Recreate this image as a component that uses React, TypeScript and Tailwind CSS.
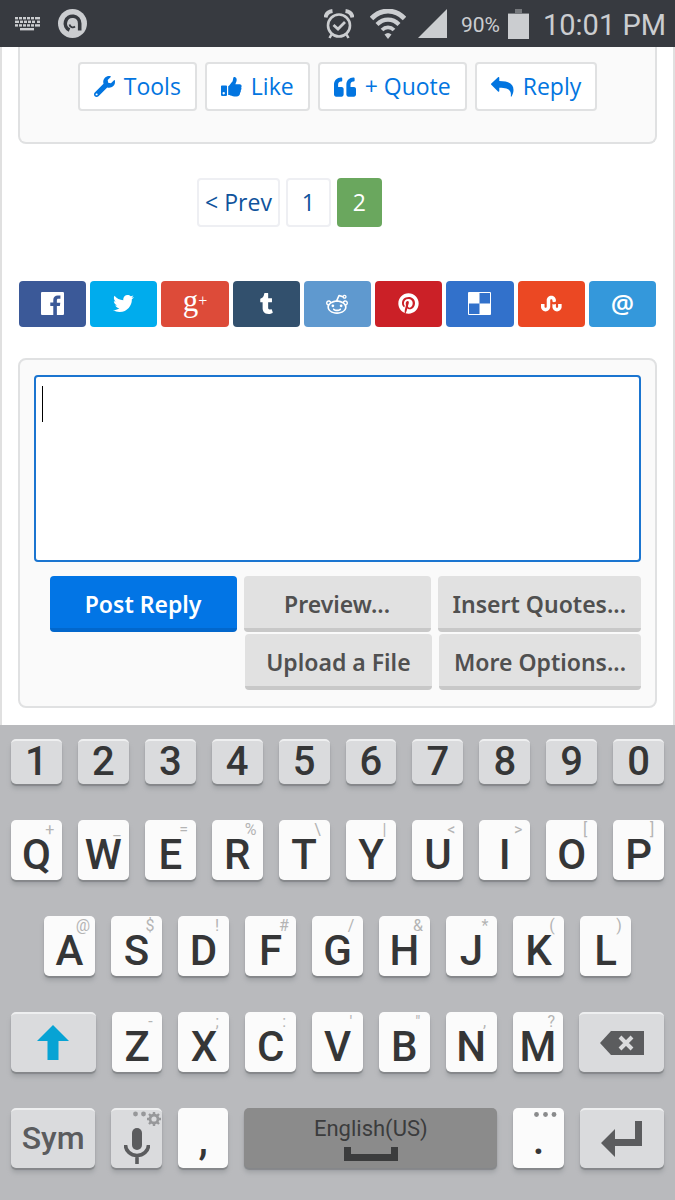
import { useState, type ReactNode } from "react";
import {
  FaPinterest,
  FaQuoteLeft,
  FaStumbleupon,
  FaTumblr,
  FaTwitter,
  FaWrench,
} from "react-icons/fa";
import { ImReddit } from "react-icons/im";

interface KeyDef {
  label: string;
  hint: string;
}

const numbers = ["1", "2", "3", "4", "5", "6", "7", "8", "9", "0"];

const topRow: KeyDef[] = [
  { label: "Q", hint: "+" },
  { label: "W", hint: "_" },
  { label: "E", hint: "=" },
  { label: "R", hint: "%" },
  { label: "T", hint: "\\" },
  { label: "Y", hint: "|" },
  { label: "U", hint: "<" },
  { label: "I", hint: ">" },
  { label: "O", hint: "[" },
  { label: "P", hint: "]" },
];

const middleRow: KeyDef[] = [
  { label: "A", hint: "@" },
  { label: "S", hint: "$" },
  { label: "D", hint: "!" },
  { label: "F", hint: "#" },
  { label: "G", hint: "/" },
  { label: "H", hint: "&" },
  { label: "J", hint: "*" },
  { label: "K", hint: "(" },
  { label: "L", hint: ")" },
];

const bottomRow: KeyDef[] = [
  { label: "Z", hint: "-" },
  { label: "X", hint: ";" },
  { label: "C", hint: ":" },
  { label: "V", hint: "'" },
  { label: "B", hint: "\"" },
  { label: "N", hint: "," },
  { label: "M", hint: "?" },
];

const keyShadow = "rounded-[5px] shadow-[0_2px_1px_#85878a,0_5px_4px_#a3a5a8]";
const greyKey = `${keyShadow} bg-[#dadbdd] border-t-2 border-[#eeeff0] text-[#5b5c5e]`;

function StatusBar() {
  return (
    <header className="flex h-[47px] items-center bg-[#373a40] pl-[15px] pr-[10px] text-[#cbcdd0] font-[Roboto,sans-serif]">
      <svg width="26" height="14" viewBox="0 0 26 14" fill="currentColor" aria-hidden="true">
        {[0, 4, 8, 12, 16, 20].map((x) => (
          <rect key={x} x={x} y="0" width={x === 20 ? 5 : 3} height="2.4" />
        ))}
        {[0, 5, 9, 13, 17, 22].map((x) => (
          <rect key={x} x={x} y="3.6" width={x === 0 ? 4 : 3} height="2.4" />
        ))}
        {[0, 4, 8, 12, 16, 20].map((x) => (
          <rect key={x} x={x} y="7.2" width={x === 20 ? 5 : 3} height="2.4" />
        ))}
        <rect x="5" y="11" width="14" height="2.4" />
      </svg>
      <svg className="ml-[17px]" width="29" height="29" viewBox="0 0 29 29" fill="none" aria-hidden="true">
        <circle cx="14.5" cy="14.5" r="14.5" fill="currentColor" />
        <path d="M11.5 21A7.200 7.200 0 1 1 21.700 14.500V21.500" stroke="#373a40" strokeWidth="3.6" />
        <path d="M11.500 15.500a3.400 3.400 0 0 0 5.500 2" stroke="#373a40" strokeWidth="1.8" />
      </svg>

      <div className="ml-auto flex items-center">
        <svg width="30" height="30" viewBox="0 0 30 30" fill="none" stroke="currentColor" aria-hidden="true">
          <circle cx="15" cy="16.5" r="11" strokeWidth="2.6" />
          <path d="M9.500 16l4.500 4 7-7" strokeWidth="2.8" />
          <path d="M1.500 8.500C2 5 4.500 2.500 8.500 2M28.500 8.500C28 5 25.500 2.500 21.500 2" strokeWidth="4" />
          <path d="M7.500 25.500L5.500 29M22.500 25.500l2 3.500" strokeWidth="2.5" />
        </svg>
        <svg className="ml-4" width="36" height="30" viewBox="0 0 36 30" fill="none" stroke="currentColor" aria-hidden="true">
          <path d="M1.500 9.500C11-.5 25-.5 34.500 9.500" strokeWidth="4.8" />
          <path d="M7 15.500c6.500-6.500 15.500-6.500 22 0" strokeWidth="4.2" />
          <path d="M12 21c3.500-3.500 8.500-3.500 12 0" strokeWidth="3.8" />
          <path d="M14.500 25.500Q18 22.500 21.500 25.500L18 30z" fill="currentColor" stroke="none" />
        </svg>
        <svg className="ml-3" width="29" height="29" viewBox="0 0 29 29" fill="currentColor" aria-hidden="true">
          <path d="M29 0v29H0z" />
        </svg>
        <span className="ml-[14px] w-10 pt-1 text-[21px]">90%</span>
        <svg className="ml-[7px]" width="21" height="30" viewBox="0 0 21 30" aria-hidden="true">
          <path d="M7 0h7v4h7v3H0V4h7z" fill="#75787c" />
          <rect y="5" width="21" height="25" fill="currentColor" />
        </svg>
        <time className="ml-[14px] w-[122px] whitespace-nowrap pt-1 text-[29px]">10:01 PM</time>
      </div>
    </header>
  );
}

function ThumbIcon() {
  return (
    <svg width="21" height="20" viewBox="0 0 21 20" fill="currentColor" aria-hidden="true">
      <path
        fillRule="evenodd"
        d="M.8 8.500h4.400q.8 0 .8.800v8.800q0 .8-.8.800H.8q-.8 0-.8-.8V9.300q0-.8.800-.8zM2.700 15a1.200 1.200 0 1 0 .01 0z"
      />
      <path d="M7.200 9.300c1.500-.5 2.600-3 3.800-4.200.9-.9.800-2.300 1.200-3.900C12.500 0 13.500-.1 14.300.3c1.500.8 1.700 2.700 1 4.400-.3.900-.8 1.500-.9 2.500h4.200c1.800 0 2.600 1.700 1.600 3.200.5 1 .3 2.200-.4 2.900.2 1.100-.1 2-.8 2.600.2 2.400-1.100 3.600-3.500 3.600-2.500.1-4.500-.6-6-1.100-.8-.3-1.500-.4-2.300-.4z" />
    </svg>
  );
}

function ReplyIcon() {
  return (
    <svg width="23" height="20" viewBox="0 0 23 20" fill="currentColor" aria-hidden="true">
      <path d="M.3 6.600L7 .3C7.600-.2 8.300 0 8.300.8v3.300c9.500 0 14.200 2.700 14.200 8.900 0 2.200-.8 4.400-1.800 6.300-.4.700-1 .6-.9-.2.700-5.600-1.800-8.300-11.500-8.300v3.300c0 .8-.7 1-1.300.5L.3 7.700Q-.3 7.200.3 6.600z" />
    </svg>
  );
}

function PostAction({ icon, label }: { icon: ReactNode; label: string }) {
  return (
    <button className="flex h-[49px] items-center gap-[9px] rounded border-2 border-[#e0e1e2] bg-white px-[14px] text-[23px] text-[#0275e0]">
      {icon}
      {label}
    </button>
  );
}

function ReplyButton({ label, primary = false }: { label: string; primary?: boolean }) {
  return (
    <button
      className={`h-14 min-w-[187px] rounded border-b-4 px-[15px] pt-[5px] text-[23px] font-semibold font-[Noto_Sans,sans-serif] ${
        primary ? "border-[#0267cc] bg-[#0275e5] text-white" : "border-[#c8c8c8] bg-[#e1e1e1] text-[#505050]"
      }`}
    >
      {label}
    </button>
  );
}

function ShareButtons() {
  const items = [
    {
      name: "Facebook",
      color: "bg-[#3b5998]",
      icon: (
        <svg width="23" height="23" viewBox="0 0 24 24" fill="currentColor" aria-hidden="true">
          <path d="M22.676 0H1.324C.593 0 0 .593 0 1.324v21.352C0 23.408.593 24 1.324 24h11.494v-9.294H9.689v-3.621h3.129V8.410c0-3.099 1.894-4.785 4.659-4.785 1.325 0 2.464.097 2.796.141v3.240h-1.921c-1.500 0-1.792.721-1.792 1.771v2.311h3.584l-.465 3.630H16.560V24h6.115c.733 0 1.325-.592 1.325-1.324V1.324C24 .593 23.408 0 22.676 0" />
        </svg>
      ),
    },
    { name: "Twitter", color: "bg-[#00aced]", icon: <FaTwitter size={21} /> },
    {
      name: "Google Plus",
      color: "bg-[#dd4b39]",
      icon: (
        <span className="flex items-center pb-1 font-[Liberation_Serif,serif] text-[31px] leading-7">
          g<span className="text-base leading-5">+</span>
        </span>
      ),
    },
    { name: "Tumblr", color: "bg-[#32506d]", icon: <FaTumblr size={21} /> },
    { name: "Reddit", color: "bg-[#5f99cf]", icon: <ImReddit size={22} /> },
    { name: "Pinterest", color: "bg-[#cb2027]", icon: <FaPinterest size={21} /> },
    {
      name: "Delicious",
      color: "bg-[#3271cb]",
      icon: (
        <svg width="23" height="23" viewBox="0 0 23 23" aria-hidden="true">
          <path d="M.5.500h22v22H.5z" fill="none" stroke="#fff" />
          <path d="M1 1h10.500v10.500H1zM11.500 11.500H22V22H11.500z" fill="#fff" />
        </svg>
      ),
    },
    { name: "StumbleUpon", color: "bg-[#eb4823]", icon: <FaStumbleupon size={21} /> },
    { name: "Email", color: "bg-[#3498db]", icon: <span className="text-[26px] font-semibold leading-6">@</span> },
  ];

  return (
    <div className="mt-[54px] flex gap-1 px-px">
      {items.map((item) => (
        <a
          key={item.name}
          href="#share"
          aria-label={item.name}
          className={`flex h-[46px] flex-1 items-center justify-center rounded pb-[2px] text-white ${item.color}`}
        >
          {item.icon}
        </a>
      ))}
    </div>
  );
}

function LetterKey({ label, hint, onPress }: KeyDef & { onPress: (value: string) => void }) {
  return (
    <button
      onClick={() => onPress(label)}
      className={`relative h-[60px] flex-[3] bg-[#fbfbfb] pt-[10px] text-[42px] font-medium leading-[50px] text-[#353637] ${keyShadow}`}
    >
      {label}
      <span className="absolute right-0 top-0 w-6 text-center text-base font-normal leading-5 text-[#b4b4b4]">
        {hint}
      </span>
    </button>
  );
}

function Keyboard({ onPress, onDelete }: { onPress: (value: string) => void; onDelete: () => void }) {
  return (
    <section className="flex flex-col gap-9 bg-[#b9babd] px-[11px] pb-8 pt-[14px] font-[Roboto,sans-serif]">
      <div className="flex gap-4">
        {numbers.map((n) => (
          <button
            key={n}
            onClick={() => onPress(n)}
            className={`h-[45px] flex-1 bg-[#dadbdd] border-t-2 border-[#eeeff0] pb-[2px] text-[40px] font-medium leading-10 text-[#353637] ${keyShadow}`}
          >
            {n}
          </button>
        ))}
      </div>
      <div className="flex gap-4">
        {topRow.map((k) => (
          <LetterKey key={k.label} {...k} onPress={onPress} />
        ))}
      </div>
      <div className="flex gap-4 px-[33px]">
        {middleRow.map((k) => (
          <LetterKey key={k.label} {...k} onPress={onPress} />
        ))}
      </div>
      <div className="flex gap-4">
        <button aria-label="Shift" className={`flex flex-[5] items-center justify-center ${greyKey}`}>
          <svg width="32" height="36" viewBox="0 0 32 36" fill="#07a3d4" aria-hidden="true">
            <path d="M16 0l16 16H21.500v19h-11V16H0z" />
          </svg>
        </button>
        {bottomRow.map((k) => (
          <LetterKey key={k.label} {...k} onPress={onPress} />
        ))}
        <button
          aria-label="Backspace"
          onClick={onDelete}
          className={`flex flex-[5] items-center justify-center ${greyKey}`}
        >
          <svg width="44" height="24" viewBox="0 0 44 24" aria-hidden="true">
            <path d="M11 0h33v24H11L0 12z" fill="currentColor" />
            <path d="M20 6l12 12M32 6L20 18" stroke="#dadbdd" strokeWidth="4" />
          </svg>
        </button>
      </div>
      <div className="flex gap-4">
        <button className={`h-[60px] flex-[5] pb-[2px] text-[32px] font-medium leading-10 ${greyKey}`}>Sym</button>
        <button aria-label="Voice input" className={`relative flex flex-[3] items-end justify-center pb-1 ${greyKey}`}>
          <svg width="26" height="36" viewBox="0 0 26 36" fill="none" stroke="currentColor" aria-hidden="true">
            <rect x="8" y="0" width="10" height="22" rx="5" fill="currentColor" stroke="none" />
            <path d="M1.500 17a11.500 10.500 0 0 0 23 0M13 28v8" strokeWidth="3.6" />
          </svg>
          <svg
            className="absolute right-px top-0"
            width="28"
            height="16"
            viewBox="0 0 28 16"
            fill="none"
            stroke="#97989a"
            aria-hidden="true"
          >
            <g fill="#97989a" stroke="none">
              <circle cx="2.5" cy="4" r="2.4" />
              <circle cx="10.5" cy="4" r="2.4" />
            </g>
            <circle cx="21" cy="9" r="4" strokeWidth="2.8" />
            <path
              d="M21 2v3M21 13v3M14 9h3M25 9h3M16 4l2 2M24 12l2 2M26 4l-2 2M18 12l-2 2"
              strokeWidth="2.4"
            />
          </svg>
        </button>
        <button
          onClick={() => onPress(",")}
          className={`h-[60px] flex-[3] bg-[#fbfbfb] pt-1 text-[42px] font-medium leading-[52px] text-[#353637] ${keyShadow}`}
        >
          ,
        </button>
        <button
          onClick={() => onPress(" ")}
          className={`flex flex-[15] flex-col items-center gap-1 bg-[#8b8b8b] pt-[7px] text-[22px] leading-7 text-[#3b3c3d] ${keyShadow}`}
        >
          English(US)
          <svg width="54" height="14" viewBox="0 0 54 14" fill="currentColor" aria-hidden="true">
            <path d="M0 0h7v7h40V0h7v14H0z" />
          </svg>
        </button>
        <button
          onClick={() => onPress(".")}
          className={`relative h-[60px] flex-[3] bg-[#fbfbfb] pt-1 text-[42px] font-medium leading-[52px] text-[#353637] ${keyShadow}`}
        >
          .
          <svg
            className="absolute right-[7px] top-1"
            width="23"
            height="5"
            viewBox="0 0 23 5"
            fill="#8a8b8c"
            aria-hidden="true"
          >
            <circle cx="2.5" cy="2.5" r="2.4" />
            <circle cx="11.5" cy="2.5" r="2.4" />
            <circle cx="20" cy="2.5" r="2.4" />
          </svg>
        </button>
        <button
          aria-label="Enter"
          onClick={() => onPress("\n")}
          className={`flex flex-[5] items-center justify-center ${greyKey}`}
        >
          <svg width="41" height="36" viewBox="0 0 41 36" fill="currentColor" aria-hidden="true">
            <path d="M34 0h7v25H14v11L0 22 14 8v10h20z" />
          </svg>
        </button>
      </div>
    </section>
  );
}

export default function App() {
  const [message, setMessage] = useState("");

  return (
    <div className="min-h-screen bg-[#b9babd] font-[Open_Sans,sans-serif]">
      <StatusBar />

      <main className="border-x-2 border-[#e0e0e0] bg-white px-4 pb-[17px]">
        <div className="flex justify-center gap-2 rounded-b-lg border-2 border-t-0 border-[#e0e1e2] bg-[#fafafa] pb-[31px] pt-[15px]">
          <PostAction icon={<FaWrench size={21} />} label="Tools" />
          <PostAction icon={<ThumbIcon />} label="Like" />
          <PostAction icon={<FaQuoteLeft size={22} />} label="+ Quote" />
          <PostAction icon={<ReplyIcon />} label="Reply" />
        </div>

        <nav className="mt-[34px] flex justify-center gap-[6px] pr-24 text-[23px] text-[#10539c]">
          <a href="#prev" className="flex h-[49px] items-center rounded border-2 border-[#eeeff3] px-[6px]">
            &lt; Prev
          </a>
          <a href="#1" className="flex h-[49px] w-[45px] items-center justify-center rounded border-2 border-[#eeeff3]">
            1
          </a>
          <a href="#2" className="flex h-[49px] w-[45px] items-center justify-center rounded bg-[#6aa75e] text-white">
            2
          </a>
        </nav>

        <ShareButtons />

        <div className="mt-[31px] rounded-lg border-2 border-[#e0e1e2] bg-[#fafafa] px-[14px] pb-4 pt-[15px]">
          <div className="relative">
            <textarea
              aria-label="Reply"
              value={message}
              onChange={(e) => setMessage(e.target.value)}
              className="block h-[187px] w-full resize-none rounded border-2 border-[#1b75d0] bg-white px-2 py-2 text-2xl outline-none"
            />
            {message === "" && <span className="absolute left-2 top-[11px] h-9 w-px bg-black" />}
          </div>
          <div className="mt-[14px] flex flex-wrap justify-end gap-x-[7px] gap-y-[2px]">
            <ReplyButton label="Post Reply" primary />
            <ReplyButton label="Preview..." />
            <ReplyButton label="Insert Quotes..." />
            <ReplyButton label="Upload a File" />
            <ReplyButton label="More Options..." />
          </div>
        </div>
      </main>

      <Keyboard
        onPress={(value) => setMessage(message + value)}
        onDelete={() => setMessage(message.slice(0, -1))}
      />
    </div>
  );
}
